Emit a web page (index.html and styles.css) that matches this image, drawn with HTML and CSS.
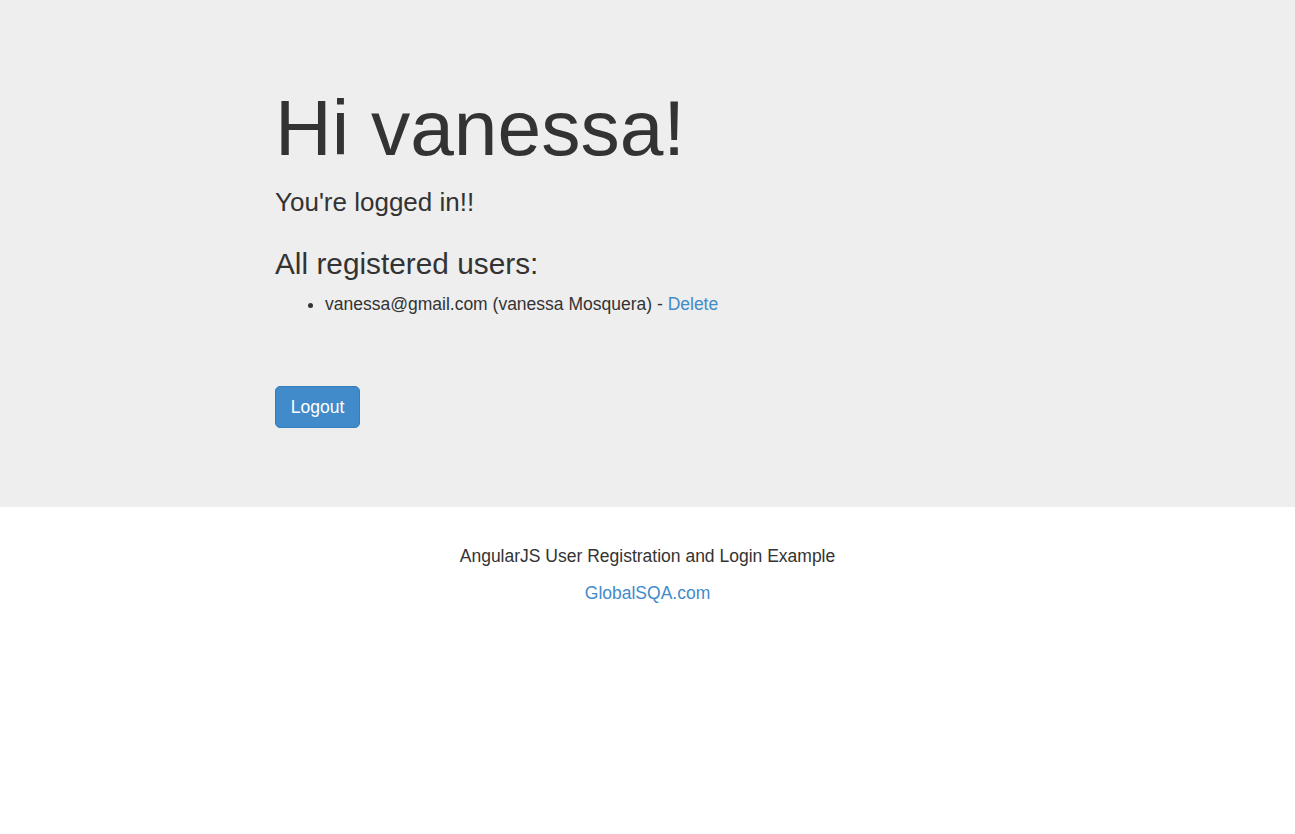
FILE: index.html
```html
<!DOCTYPE html>
<html>
<head>
<meta charset="utf-8">
<title>AngularJS User Registration and Login Example</title>
<link rel="stylesheet" href="styles.css">
</head>
<body>
<div class="jumbotron">
  <div class="content">
    <h1 class="title">Hi vanessa!</h1>
    <p class="lead">You're logged in!!</p>
    <h3 class="subtitle">All registered users:</h3>
    <ul class="users">
      <li>vanessa@gmail.com (vanessa Mosquera) - <a href="#" class="link">Delete</a></li>
    </ul>
    <div class="actions"><a href="#" class="btn">Logout</a></div>
  </div>
</div>
<div class="credits">
  <p class="credits-text">AngularJS User Registration and Login Example</p>
  <p class="credits-text"><a href="#" class="link">GlobalSQA.com</a></p>
</div>
</body>
</html>
```
FILE: styles.css
```css
html, body {
  margin: 0;
  padding: 0;
  background: #fff;
}
body {
  font-family: "Liberation Sans", Arial, Helvetica, sans-serif;
  color: #333;
  font-size: 17.5px;
  line-height: 24px;
}
.jumbotron {
  background: #eee;
  padding: 58px 0 79px;
}
.content {
  margin-left: 275px;
}
.title {
  margin: 28px 0 0;
  font-size: 78.5px;
  line-height: 84px;
  font-weight: 400;
  color: #333;
}
.lead {
  margin: 14px 0 0;
  font-size: 26px;
  line-height: 36px;
  font-weight: 300;
}
.subtitle {
  margin: 28px 0 0;
  font-size: 29.8px;
  line-height: 32px;
  font-weight: 400;
}
.users {
  margin: 12px 0 0;
  padding-left: 50px;
}
.users li {
  font-size: 17.5px;
  line-height: 24px;
}
.link {
  color: #428bca;
  text-decoration: none;
}
.actions {
  margin-top: 70px;
  display: flex;
}
.btn {
  display: flex;
  align-items: center;
  justify-content: center;
  box-sizing: border-box;
  width: 85px;
  height: 42px;
  padding: 0;
  background: #428bca;
  border: 1px solid #357ebd;
  border-radius: 5px;
  color: #fff;
  font-size: 17.5px;
  text-decoration: none;
}
.credits {
  padding-top: 37px;
  text-align: center;
}
.credits-text {
  margin: 0 0 13px;
  font-size: 17.5px;
  line-height: 24px;
}
```
